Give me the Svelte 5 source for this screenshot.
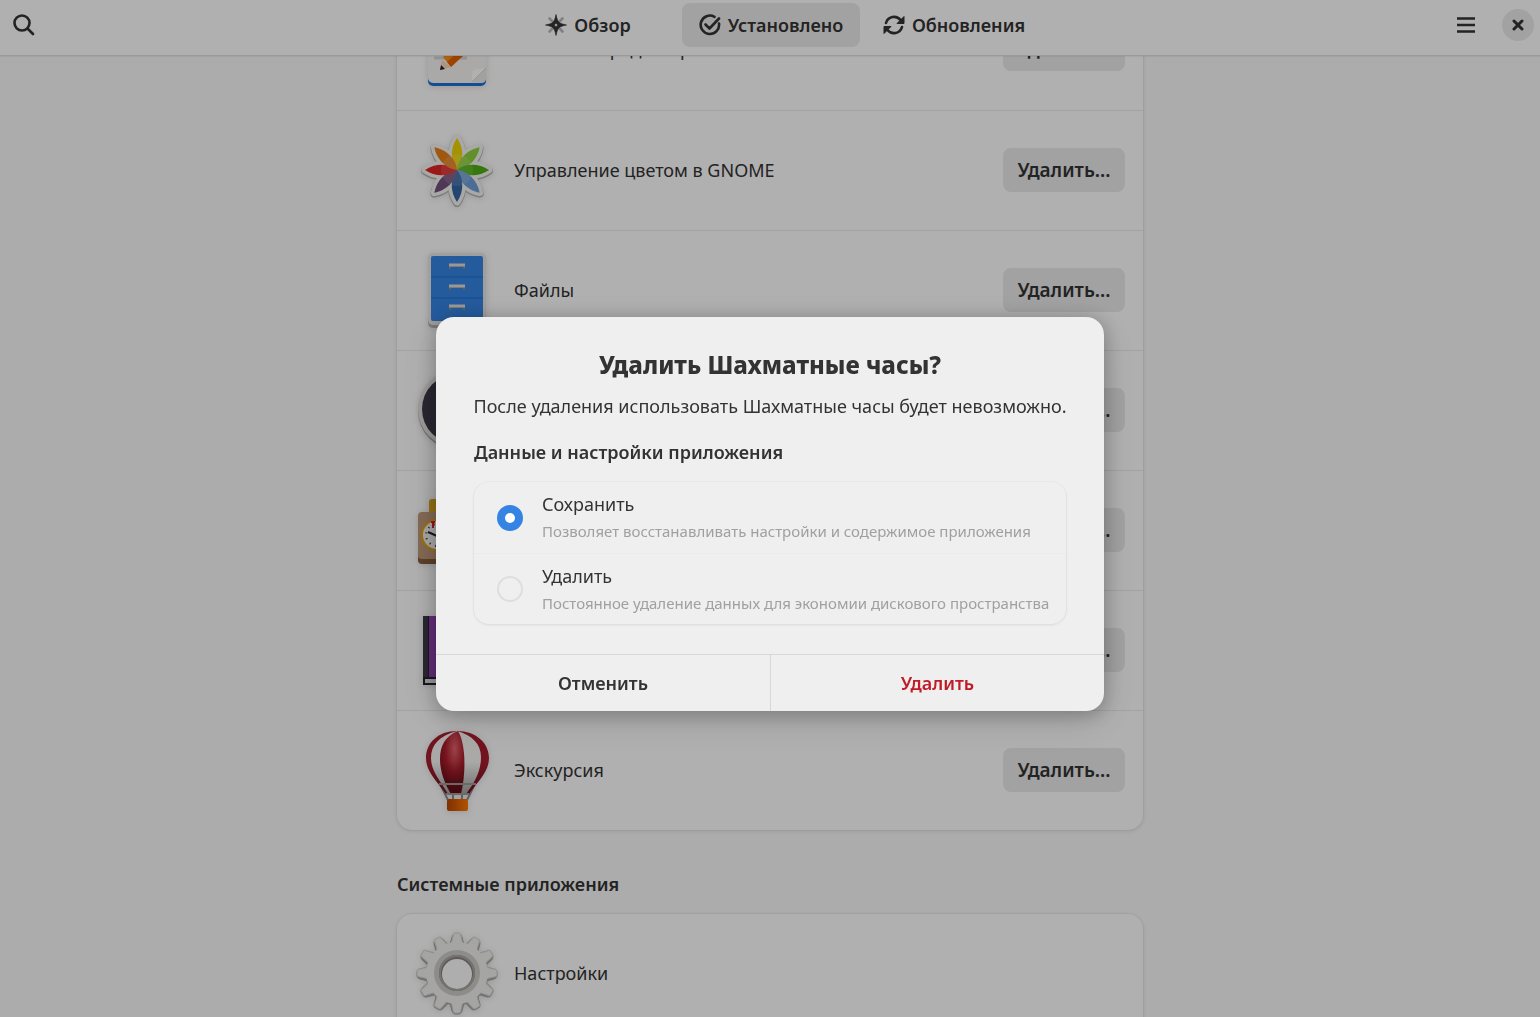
<script lang="ts">
	type AppIcon = 'editor' | 'color' | 'files' | 'clock' | 'chess' | 'dictionary' | 'tour' | 'settings';

	interface AppEntry {
		name: string;
		icon: AppIcon;
		removable: boolean;
	}

	const apps: AppEntry[] = [
		{ name: 'Текстовый редактор', icon: 'editor', removable: true },
		{ name: 'Управление цветом в GNOME', icon: 'color', removable: true },
		{ name: 'Файлы', icon: 'files', removable: true },
		{ name: 'Часы', icon: 'clock', removable: true },
		{ name: 'Шахматные часы', icon: 'chess', removable: true },
		{ name: 'Словарь', icon: 'dictionary', removable: true },
		{ name: 'Экскурсия', icon: 'tour', removable: true }
	];

	const systemApps: AppEntry[] = [{ name: 'Настройки', icon: 'settings', removable: false }];

	const tabs = [
		{ id: 'explore', label: 'Обзор' },
		{ id: 'installed', label: 'Установлено' },
		{ id: 'updates', label: 'Обновления' }
	];

	const options = [
		{
			value: 'keep',
			title: 'Сохранить',
			subtitle: 'Позволяет восстанавливать настройки и содержимое приложения'
		},
		{
			value: 'delete',
			title: 'Удалить',
			subtitle: 'Постоянное удаление данных для экономии дискового пространства'
		}
	];

	const petals = ['#f0d400', '#8fd03a', '#4fae10', '#6f9fd8', '#3465a4', '#75507b', '#e02424', '#e8801a'];
	const petalPath = 'M40 40C33 32 33 18 40 8C47 18 47 32 40 40Z';
	const teeth = Array.from({ length: 12 }, (_, i) => i * 30);

	let activeTab = $state('installed');
	let choice = $state('keep');
	let open = $state(true);
</script>

{#snippet appIcon(icon: AppIcon)}
	<svg class="app-icon" viewBox="0 0 80 80" aria-hidden="true">
		{#if icon === 'editor'}
			<rect x="11" y="6" width="58" height="71" rx="5" fill="#1c71d8" />
			<rect x="11" y="4" width="58" height="70" rx="5" fill="#f6f5f4" />
			<path d="M17 49H50" stroke="#d5d4d1" stroke-width="3" />
			<path d="M26 48L47 28L54 36L34 58Z" fill="#ff8c1a" />
			<path d="M34 58L46 47L42 42L30 53Z" fill="#e66100" />
			<path d="M25 51L34 58L23 61Z" fill="#f6d9b8" />
			<path d="M24 56L28 60L23 61Z" fill="#241f31" />
			<path d="M55 73L69 59V69Q69 74 64 74Z" fill="#eae9e7" />
			<path d="M55 73V66Q55 60 61 60L69 59Z" fill="#ffffff" />
			<path d="M55 73L69 59" stroke="#d5d4d1" />
		{:else if icon === 'color'}
			<g stroke="#b4b3b0" stroke-width="8" stroke-linejoin="round">
				{#each petals as _, i}
					<path d={petalPath} transform="translate(0 1) rotate({i * 45} 40 40)" />
				{/each}
			</g>
			<g stroke="#f4f4f2" stroke-width="7" stroke-linejoin="round">
				{#each petals as _, i}
					<path d={petalPath} transform="rotate({i * 45} 40 40)" />
				{/each}
			</g>
			{#each petals as fill, i}
				<path d={petalPath} {fill} transform="rotate({i * 45} 40 40)" />
			{/each}
			<circle cx="40" cy="40" r="16" fill="#ffffff" opacity="0.12" />
		{:else if icon === 'files'}
			<rect x="11" y="4" width="58" height="74" rx="5" fill="#b5b4b1" />
			<rect x="11" y="3" width="58" height="72" rx="5" fill="#e8e7e4" />
			<rect x="14" y="6" width="52" height="65" rx="2" fill="#3584e4" />
			<path d="M14 27H66M14 48H66" stroke="#1a6fd0" stroke-width="1" />
			{#each [14, 35, 55] as y}
				<path d="M33 {y + 5}V{y + 2}H47V{y + 5}" fill="none" stroke="#8a8986" stroke-width="2" />
				<path d="M32 {y + 1}H48" stroke="#deddda" stroke-width="3" />
			{/each}
		{:else if icon === 'clock'}
			<circle cx="40" cy="41" r="39" fill="#a9a8a5" />
			<circle cx="40" cy="39" r="39" fill="#e4e3e0" />
			<circle cx="40" cy="39" r="35" fill="#3d3846" />
			<path d="M40 39L24 28M40 39V14" stroke="#ffffff" stroke-width="4" stroke-linecap="round" />
		{:else if icon === 'chess'}
			<rect x="12" y="9" width="16" height="18" rx="3" fill="#d9a520" />
			<rect x="52" y="9" width="16" height="18" rx="3" fill="#d9a520" />
			<rect x="1" y="24" width="78" height="50" rx="4" fill="#865e3c" />
			<rect x="1" y="22" width="78" height="47" rx="4" fill="#c09a7a" />
			<circle cx="20" cy="45" r="15" fill="#f6f5f4" stroke="#e5a50a" stroke-width="2" />
			<circle cx="60" cy="45" r="15" fill="#f6f5f4" stroke="#e5a50a" stroke-width="2" />
			<circle cx="20" cy="45" r="11" fill="none" stroke="#241f31" stroke-width="2" stroke-dasharray="1 5" />
			<path d="M20 46L11 42" stroke="#241f31" stroke-width="2" />
			<path d="M16 31V38M14 32H18" stroke="#e01b24" stroke-width="2" />
		{:else if icon === 'dictionary'}
			<rect x="6" y="6" width="66" height="69" fill="#241f31" />
			<rect x="8" y="69" width="64" height="4" fill="#deddda" />
			<rect x="12" y="6" width="60" height="61" fill="#9141ac" />
			<rect x="6" y="6" width="5" height="61" fill="#3d3846" />
		{:else if icon === 'tour'}
			<defs>
				<clipPath id="balloon">
					<path d="M40 1C21 1 9 13 9 28C9 41 19 50 29 64H52C62 50 72 41 72 28C72 13 59 1 40 1Z" />
				</clipPath>
				<radialGradient id="balloon-red" cx="0.6" cy="0.28" r="0.6">
					<stop offset="0" stop-color="#e0626a" />
					<stop offset="0.6" stop-color="#b0202e" />
					<stop offset="1" stop-color="#8c1420" />
				</radialGradient>
				<linearGradient id="balloon-shade" x2="0" y2="1">
					<stop offset="0.5" stop-color="#000000" stop-opacity="0" />
					<stop offset="1" stop-color="#000000" stop-opacity="0.35" />
				</linearGradient>
				<linearGradient id="basket">
					<stop offset="0" stop-color="#b94600" />
					<stop offset="1" stop-color="#ff7800" />
				</linearGradient>
			</defs>
			<path d="M23 54L31 70M58 54L50 70M36 62V70M45 62V70" stroke="#8a898c" stroke-width="2" />
			<g clip-path="url(#balloon)">
				<rect width="80" height="64" fill="#a51d2d" />
				<path
					d="M40 1C22 6 14 15 14 28C14 41 23 50 31 64H49C58 52 64 41 64 27C64 14 55 5 40 1Z"
					fill="#f6f5f4"
				/>
				<path d="M41 1C28 6 23 16 23 29C23 42 28 54 34 64H44C49 44 49 14 41 1Z" fill="url(#balloon-red)" />
				<rect width="80" height="64" fill="url(#balloon-shade)" />
			</g>
			<path d="M22 54H59M29 64H52" stroke="#9a9996" stroke-width="2" />
			<rect x="30" y="69" width="21" height="12" rx="2" fill="url(#basket)" />
		{:else}
			<g fill="#a5a3a0" stroke="#a5a3a0">
				{#each teeth as angle}
					<path
						d="M33 11L35 3Q36 0 38 0H42Q44 0 45 3L47 11Z"
						transform="translate(0 1) rotate({angle} 40 40)"
					/>
				{/each}
				<circle cx="40" cy="41" r="31" />
			</g>
			<g fill="#f0efed" stroke="#d5d3cf">
				{#each teeth as angle}
					<path d="M34 12L36 3Q36 0 38 0H42Q44 0 44 3L46 12Z" transform="rotate({angle} 40 40)" />
				{/each}
			</g>
			<circle cx="40" cy="40" r="31" fill="#f0efed" />
			<circle cx="40" cy="40" r="23" fill="#cecbc5" />
			<circle cx="40" cy="40" r="18" fill="#86847f" />
			<circle cx="40" cy="40" r="17" fill="none" stroke="#a9a7a2" stroke-width="2" />
			<circle cx="40" cy="41" r="15" fill="#fcfcfc" />
		{/if}
	</svg>
{/snippet}

{#snippet appList(entries: AppEntry[])}
	<ul class="app-list">
		{#each entries as app}
			<li class="app-row">
				{@render appIcon(app.icon)}
				<span class="app-name">{app.name}</span>
				{#if app.removable}
					<button type="button" class="remove" onclick={() => (open = true)}>Удалить…</button>
				{/if}
			</li>
		{/each}
	</ul>
{/snippet}

<div class="window">
	<header class="headerbar">
		<button type="button" class="flat" aria-label="Поиск">
			<svg width="24" height="24" viewBox="0 0 24 24" fill="none" stroke="currentColor" stroke-width="2.6">
				<circle cx="10" cy="10" r="7.5" />
				<path d="M15.5 15.5L21 21" stroke-linecap="round" />
			</svg>
		</button>
		<nav class="tabs">
			{#each tabs as tab}
				<button
					type="button"
					class="tab"
					class:active={activeTab === tab.id}
					onclick={() => (activeTab = tab.id)}
				>
					<svg width="22" height="22" viewBox="0 0 22 22" fill="none" aria-hidden="true">
						{#if tab.id === 'explore'}
							<path
								d="M4.5 4.5L8 8M17.5 4.5L14 8M4.5 17.5L8 14M17.5 17.5L14 14"
								stroke="currentColor"
								stroke-width="2.6"
								stroke-linecap="round"
								opacity="0.35"
							/>
							<path
								d="M11 0.5Q12.5 7.5 14 8Q14.5 9.5 21.5 11Q14.5 12.5 14 14Q12.5 14.5 11 21.5Q9.5 14.5 8 14Q7.5 12.5 0.5 11Q7.5 9.5 8 8Q9.5 7.5 11 0.5ZM11 9.5A1.5 1.5 0 1 0 11 12.5A1.5 1.5 0 1 0 11 9.5Z"
								fill="currentColor"
								fill-rule="evenodd"
								stroke="currentColor"
								stroke-width="0.6"
							/>
						{:else if tab.id === 'installed'}
							<path
								d="M15.5 2.8A9.2 9.2 0 1 0 20 9.5M6.5 10.5L10.5 14.5L20 4.5"
								stroke="currentColor"
								stroke-width="2.6"
								stroke-linecap="round"
								stroke-linejoin="round"
							/>
						{:else}
							<path
								d="M3 9A8.3 8.3 0 0 1 17.5 6M19 13A8.3 8.3 0 0 1 4.5 16"
								stroke="currentColor"
								stroke-width="2.6"
								stroke-linecap="round"
							/>
							<path d="M21 2.5V9.5H14ZM1 19.5V12.5H8Z" fill="currentColor" stroke="currentColor" />
						{/if}
					</svg>
					{tab.label}
				</button>
			{/each}
		</nav>
		<div class="window-controls">
			<button type="button" class="flat" aria-label="Меню">
				<svg width="20" height="20" viewBox="0 0 20 20" stroke="currentColor" stroke-width="2.6">
					<path d="M1 3.5H19M1 10H19M1 16.5H19" />
				</svg>
			</button>
			<button type="button" class="close" aria-label="Закрыть">
				<svg width="12" height="12" viewBox="0 0 12 12" stroke="currentColor" stroke-width="3">
					<path d="M2 2L10 10M10 2L2 10" stroke-linecap="round" />
				</svg>
			</button>
		</div>
	</header>

	<main class="content">
		<div class="clamp">
			{@render appList(apps)}
			<h2>Системные приложения</h2>
			{@render appList(systemApps)}
		</div>
	</main>
</div>

{#if open}
	<div class="backdrop">
		<div class="dialog" role="dialog" aria-modal="true" aria-labelledby="dialog-title">
			<div class="dialog-body">
				<h1 id="dialog-title">Удалить Шахматные часы?</h1>
				<p class="message">После удаления использовать Шахматные часы будет невозможно.</p>
				<fieldset>
					<legend>Данные и настройки приложения</legend>
					<div class="options">
						{#each options as option}
							<label class="option">
								<input type="radio" name="data" value={option.value} bind:group={choice} />
								<span class="option-text">
									<span class="option-title">{option.title}</span>
									<span class="option-subtitle">{option.subtitle}</span>
								</span>
							</label>
						{/each}
					</div>
				</fieldset>
			</div>
			<div class="actions">
				<button type="button" onclick={() => (open = false)}>Отменить</button>
				<button type="button" class="destructive" onclick={() => (open = false)}>Удалить</button>
			</div>
		</div>
	</div>
{/if}

<style>
	:global(body) {
		margin: 0;
		font-family: 'Noto Sans', sans-serif;
		font-size: 18px;
		line-height: 26px;
		color: #333333;
	}

	button {
		margin: 0;
		padding: 0;
		border: none;
		background: none;
		color: inherit;
		font: inherit;
		font-weight: 600;
		cursor: pointer;
	}

	.window {
		display: flex;
		flex-direction: column;
		height: 100vh;
		overflow: hidden;
		background: #fafafa;
	}

	.headerbar {
		display: grid;
		grid-template-columns: 1fr auto 1fr;
		align-items: center;
		height: 50px;
		padding: 0 6px 5px 8px;
		border-bottom: 1px solid #e0e0e0;
		box-shadow: 0 1px 1px #0000000d;
		background: #ffffff;
		z-index: 1;
	}

	.flat,
	.close,
	.tab {
		display: flex;
		align-items: center;
		justify-content: center;
	}

	.flat {
		justify-self: start;
		padding: 4px;
	}

	.tabs {
		display: grid;
		grid-template-columns: repeat(3, 178px);
		gap: 5px;
	}

	.tab {
		gap: 7px;
		height: 44px;
		border-radius: 8px;
	}

	.tab.active,
	.remove {
		background: #ebebeb;
	}

	.window-controls {
		display: flex;
		align-items: center;
		justify-content: flex-end;
		gap: 22px;
	}

	.close {
		width: 32px;
		height: 32px;
		border-radius: 50%;
		background: #ebebeb;
	}

	.content {
		flex: 1;
		min-height: 0;
		overflow: hidden;
	}

	.clamp {
		max-width: 746px;
		margin: -66px auto 0;
	}

	.app-list {
		margin: 0;
		padding: 0;
		list-style: none;
		border-radius: 15px;
		background: #ffffff;
		box-shadow: 0 0 0 1px #00000008, 0 1px 4px 1px #00000014;
	}

	.app-row {
		box-sizing: border-box;
		display: flex;
		align-items: center;
		gap: 17px;
		height: 120px;
		padding: 0 18px 2px 20px;
	}

	.app-row + .app-row {
		border-top: 1px solid #ebebeb;
	}

	.app-icon {
		width: 80px;
		height: 80px;
		overflow: visible;
		filter: drop-shadow(0 1px 3px #00000022);
	}

	.app-name {
		flex: 1;
	}

	.remove {
		min-width: 122px;
		height: 44px;
		padding: 0 13px;
		border-radius: 8px;
		font-size: 19px;
	}

	h2 {
		margin: 41px 0 17px;
		font-size: 18px;
		font-weight: 600;
		line-height: 26px;
	}

	.backdrop {
		position: fixed;
		inset: 0;
		z-index: 2;
		display: flex;
		align-items: center;
		justify-content: center;
		padding-top: 11px;
		background: rgba(0, 0, 0, 0.31);
	}

	.dialog {
		width: 668px;
		border-radius: 18px;
		background: #efefef;
		box-shadow: 0 3px 18px 2px #00000038, 0 10px 40px #00000020;
		overflow: hidden;
	}

	.dialog-body {
		padding: 32px 38px 30px;
	}

	h1 {
		margin: 0;
		font-size: 24px;
		font-weight: 800;
		line-height: 32px;
		text-align: center;
	}

	.message {
		margin: 12px -10px 20px;
		text-align: center;
		white-space: nowrap;
	}

	fieldset {
		min-width: 0;
		margin: 0;
		padding: 0;
		border: none;
	}

	legend {
		padding: 0 0 17px;
		font-weight: 600;
	}

	.options {
		border-radius: 15px;
		box-shadow: 0 0 0 1px #00000006, 0 1px 2px 1px #0000000a;
	}

	.option {
		box-sizing: border-box;
		display: flex;
		align-items: center;
		gap: 19px;
		height: 71px;
		padding: 0 0 0 23px;
	}

	.option + .option {
		border-top: 1px solid #ebebeb;
	}

	.option input {
		flex: none;
		appearance: none;
		box-sizing: border-box;
		width: 26px;
		height: 26px;
		margin: 0;
		border: 2px solid #dedede;
		border-radius: 50%;
	}

	.option input:checked {
		border: 8px solid #3584e4;
		background: #ffffff;
	}

	.option-text {
		display: flex;
		flex-direction: column;
		gap: 1px;
		white-space: nowrap;
	}

	.option-subtitle {
		font-size: 15px;
		color: #a0a0a0;
	}

	.actions {
		display: grid;
		grid-template-columns: 1fr 1fr;
		border-top: 1px solid #d8d8d8;
	}

	.actions button {
		height: 56px;
	}

	.actions button + button {
		border-left: 1px solid #d8d8d8;
	}

	.actions .destructive {
		color: #c01c28;
	}
</style>
